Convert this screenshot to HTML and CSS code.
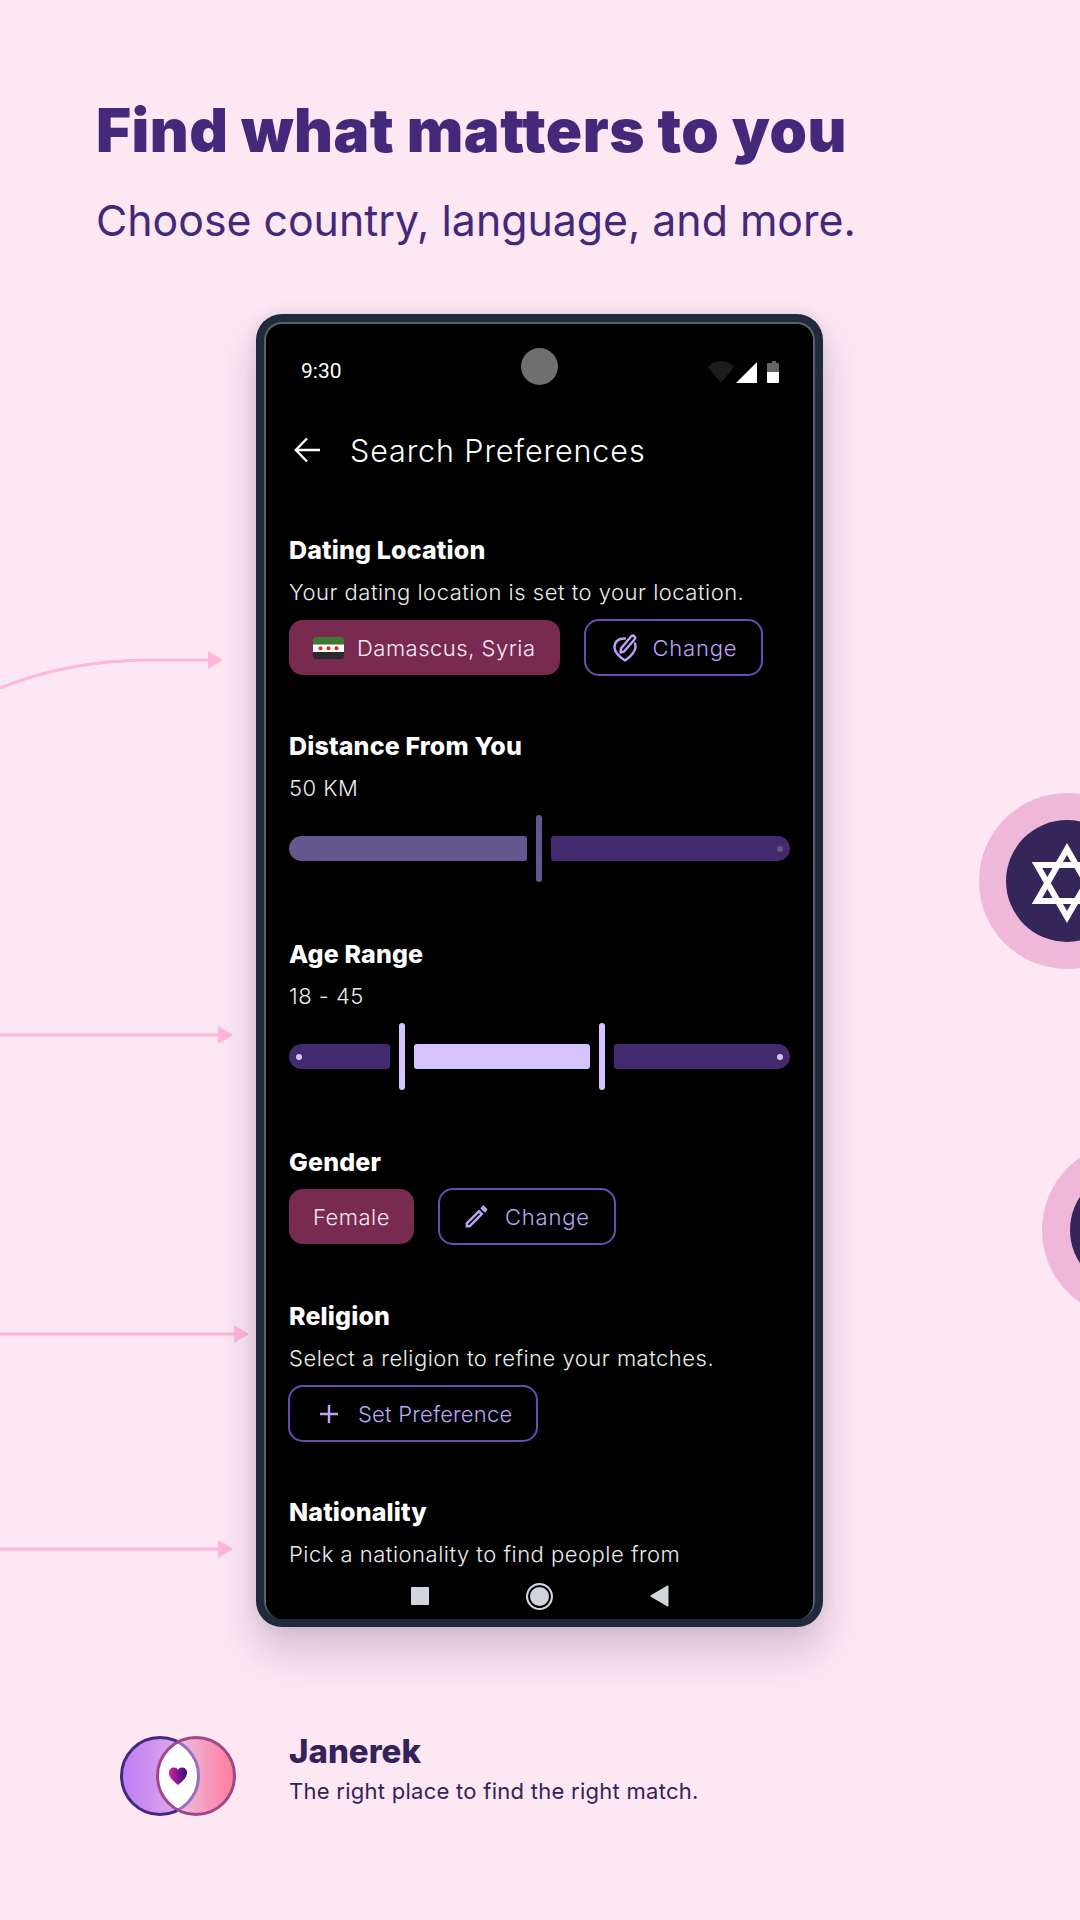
FILE: index.html
```html
<!DOCTYPE html>
<html lang="en">
<head>
    <meta charset="UTF-8">
    <meta name="viewport" content="width=device-width, initial-scale=1.0">
    <title>Janerek - Find what matters to you</title>
    <link rel="stylesheet" href="styles.css">
</head>
<body>
    <div class="page">
        <!-- Arrows and circles peeking in around the phone -->
        <svg class="decor" viewBox="0 0 1080 1920" aria-hidden="true">
            <g class="arrow-line">
                <path d="M0 688C50 668 100 660 150 660H210"/>
                <path d="M0 1035H220"/>
                <path d="M0 1334H236"/>
                <path d="M0 1549H220"/>
            </g>
            <g class="arrow-head">
                <polygon points="208,651 223,660 208,669"/>
                <polygon points="218,1026 233,1035 218,1044"/>
                <polygon points="234,1325 249,1334 234,1343"/>
                <polygon points="218,1540 233,1549 218,1558"/>
            </g>
            <circle class="ring" cx="1067" cy="881" r="88"/>
            <circle class="ring-inner" cx="1067" cy="881" r="61"/>
            <g class="star">
                <polygon points="1067,849 1097,901 1037,901"/>
                <polygon points="1067,917 1037,865 1097,865"/>
            </g>
            <circle class="ring" cx="1130" cy="1230" r="88"/>
            <circle class="ring-inner" cx="1130" cy="1230" r="60"/>
        </svg>

        <header class="hero">
            <h1>Find what matters to you</h1>
            <p>Choose country, language, and more.</p>
        </header>

        <div class="phone">
            <div class="screen">
                <div class="status-bar">
                    <span class="clock">9:30</span>
                    <span class="camera"></span>
                    <svg class="status-icons" width="71" height="22" viewBox="0 0 71 22">
                        <path d="M0 6C3 2 8 0 13 0s10 2 13 6L13 22z" fill="#1c1c1c"/>
                        <path d="M28 22L49 1v21z" fill="#fff"/>
                        <path d="M62 2h2V0h4v2h2a1 1 0 0 1 1 1v8H59V3a1 1 0 0 1 1-1z" fill="#666"/>
                        <path d="M59 11h12v10a1 1 0 0 1-1 1H60a1 1 0 0 1-1-1z" fill="#fff"/>
                    </svg>
                </div>

                <div class="app-bar">
                    <svg width="26" height="26" viewBox="0 0 26 26" fill="none" stroke="#fff" stroke-width="2.4">
                        <path d="M26 13H2M13 1.500L1.800 13 13 24.500"/>
                    </svg>
                    <span>Search Preferences</span>
                </div>

                <div class="content">
                    <section class="pref">
                        <h2>Dating Location</h2>
                        <p class="hint">Your dating location is set to your location.</p>
                        <div class="actions">
                            <div class="chip">
                                <svg class="flag" width="31" height="22" viewBox="0 0 31 22">
                                    <rect width="31" height="7.500" fill="#3f7a35"/>
                                    <rect y="7.500" width="31" height="7.500" fill="#fff"/>
                                    <rect y="15" width="31" height="7" fill="#2a2a2a"/>
                                    <g fill="#e8231a">
                                        <circle cx="7.500" cy="11.200" r="2"/>
                                        <circle cx="15.500" cy="11.200" r="2"/>
                                        <circle cx="23.500" cy="11.200" r="2"/>
                                    </g>
                                </svg>
                                Damascus, Syria
                            </div>
                            <div class="btn-outline">
                                <svg width="24" height="28" viewBox="0 0 24 28" fill="none" stroke="#bfa3f5" stroke-width="2.4" stroke-linecap="round" stroke-linejoin="round">
                                    <path d="M12 4.500C6 4 1.500 7.500 1.500 13c0 5 5 10 10.500 13.500C17 23 22.500 18 22.500 12.500c0-1-.2-2-.5-3"/>
                                    <path d="M8 14.500L18 2.500c1-1 2.500-1 3.500 0s1 2 0 3L11 17.500l-3.500 1z"/>
                                </svg>
                                Change
                            </div>
                        </div>
                    </section>

                    <section class="pref pref-slider">
                        <h2>Distance From You</h2>
                        <p class="hint">50 KM</p>
                        <div class="slider">
                            <div class="track track-start track-mid"></div>
                            <div class="handle handle-mid"></div>
                            <div class="track track-end">
                                <span class="stop stop-mid"></span>
                            </div>
                        </div>
                    </section>

                    <section class="pref pref-slider">
                        <h2>Age Range</h2>
                        <p class="hint">18 - 45</p>
                        <div class="slider">
                            <div class="track track-start track-low">
                                <span class="stop"></span>
                            </div>
                            <div class="handle"></div>
                            <div class="track track-range"></div>
                            <div class="handle"></div>
                            <div class="track track-end">
                                <span class="stop"></span>
                            </div>
                        </div>
                    </section>

                    <section class="pref">
                        <h2>Gender</h2>
                        <div class="actions actions-tight">
                            <div class="chip">Female</div>
                            <div class="btn-outline btn-edit">
                                <svg width="29" height="29" viewBox="0 0 24 24" fill="#bfa3f5">
                                    <path d="M3 17.250V21h3.750L17.810 9.940l-3.750-3.750L3 17.250zM5.920 19H5v-.92l9.060-9.060.92.92L5.920 19zM20.710 5.630l-2.340-2.340c-.39-.39-1.020-.39-1.410 0l-1.830 1.830 3.750 3.750 1.830-1.830c.39-.39.39-1.020 0-1.410z"/>
                                </svg>
                                Change
                            </div>
                        </div>
                    </section>

                    <section class="pref">
                        <h2>Religion</h2>
                        <p class="hint">Select a religion to refine your matches.</p>
                        <div class="actions">
                            <div class="btn-outline btn-wide">
                                <svg width="20" height="20" viewBox="0 0 20 20" stroke="#bfa3f5" stroke-width="2.4">
                                    <path d="M10 1v18M1 10h18"/>
                                </svg>
                                Set Preference
                            </div>
                        </div>
                    </section>

                    <section class="pref">
                        <h2>Nationality</h2>
                        <p class="hint">Pick a nationality to find people from</p>
                    </section>
                </div>

                <div class="nav-bar">
                    <span class="nav-square"></span>
                    <span class="nav-home"></span>
                    <svg width="19" height="22" viewBox="0 0 19 22">
                        <path d="M18.500 1.500v19a1 1 0 0 1-1.500.8L.8 11.800a1 1 0 0 1 0-1.600L17 .7a1 1 0 0 1 1.500.8z" fill="#d1d5db"/>
                    </svg>
                </div>
            </div>
        </div>

        <footer class="brand">
            <svg class="logo" width="118" height="82" viewBox="0 0 118 82">
                <defs>
                    <linearGradient id="logoLeft">
                        <stop offset="0" stop-color="#bd7cf6"/>
                        <stop offset="1" stop-color="#eab8e4"/>
                    </linearGradient>
                    <linearGradient id="logoRight">
                        <stop offset="0" stop-color="#e6d6fb"/>
                        <stop offset="1" stop-color="#ff7b9c"/>
                    </linearGradient>
                    <linearGradient id="logoHeart">
                        <stop offset="0" stop-color="#d81fa6"/>
                        <stop offset="1" stop-color="#2c1078"/>
                    </linearGradient>
                    <clipPath id="logoClipLeft">
                        <circle cx="41" cy="41" r="38.500"/>
                    </clipPath>
                    <clipPath id="logoClipRight">
                        <circle cx="77" cy="41" r="38.500"/>
                    </clipPath>
                </defs>
                <circle cx="41" cy="41" r="38.500" fill="url(#logoLeft)" stroke="#40297e" stroke-width="3"/>
                <circle cx="77" cy="41" r="38.500" fill="url(#logoRight)"/>
                <circle cx="77" cy="41" r="38.500" fill="#fff" clip-path="url(#logoClipLeft)"/>
                <circle cx="41" cy="41" r="38.500" fill="none" stroke="#9270c4" stroke-width="3" clip-path="url(#logoClipRight)"/>
                <circle cx="77" cy="41" r="38.500" fill="none" stroke="#a0478c" stroke-width="3"/>
                <path d="M59 50C53 45 50 42 50 37.500c0-3 2.300-5 5-5 1.700 0 3 .8 4 2.200 1-1.400 2.300-2.200 4-2.200 2.700 0 5 2 5 5 0 4.500-3 7.500-9 12.500z" fill="url(#logoHeart)"/>
            </svg>
            <div class="brand-text">
                <strong>Janerek</strong>
                <span>The right place to find the right match.</span>
            </div>
        </footer>
    </div>
</body>
</html>
```

FILE: styles.css
```css
/* Global styles */
body {
    margin: 0;
    font-family: 'Inter', 'Liberation Sans', sans-serif;
}

.page {
    position: relative;
    width: 1080px;
    height: 1920px;
    overflow: hidden;
    background: #fce7f3;
}

.decor {
    position: absolute;
    top: 0;
    left: 0;
    width: 1080px;
    height: 1920px;
}

.arrow-line path {
    fill: none;
    stroke: #ffb6da;
    stroke-width: 3;
}

.arrow-head {
    fill: #ffb6da;
}

.ring {
    fill: #f0b8d8;
}

.ring-inner {
    fill: #35265a;
}

.star polygon {
    fill: none;
    stroke: #fff;
    stroke-width: 6;
}

/* Headline */
.hero {
    position: relative;
    padding: 92px 0 0 96px;
    color: #44297a;
}

.hero h1 {
    margin: 0;
    font-size: 60px;
    line-height: 76px;
    font-weight: 900;
    letter-spacing: 0.5px;
}

.hero p {
    margin: 24px 0 0;
    font-size: 42.800px;
    line-height: 58px;
    font-weight: 400;
}

/* Phone */
.phone {
    position: relative;
    box-sizing: border-box;
    width: 567px;
    height: 1313px;
    margin: 64px 0 0 256px;
    background: #1f2a3c;
    border-radius: 26px;
    padding: 8px;
    box-shadow: 0 24px 40px rgba(60, 30, 70, 0.2), 0 0 14px rgba(60, 30, 70, 0.1);
}

.screen {
    display: flex;
    flex-direction: column;
    box-sizing: border-box;
    height: 100%;
    background: #000;
    border: solid #5a5f65;
    border-width: 2px 2px 0;
    border-radius: 18px;
    overflow: hidden;
    color: #fff;
}

.status-bar {
    display: flex;
    align-items: center;
    justify-content: space-between;
    position: relative;
    height: 88px;
    padding: 0 34px 0 35px;
    flex-shrink: 0;
}

.clock {
    font-family: 'Roboto', sans-serif;
    font-size: 21px;
    font-weight: 400;
    margin-top: 5px;
}

.camera {
    position: absolute;
    left: 255px;
    top: 24px;
    width: 37px;
    height: 37px;
    border-radius: 50%;
    background: #6f6f6f;
}

.status-icons {
    margin-top: 8px;
}

.app-bar {
    display: flex;
    align-items: center;
    gap: 30px;
    height: 76px;
    padding-left: 28px;
    flex-shrink: 0;
    font-size: 30.500px;
    font-weight: 300;
    letter-spacing: 0.9px;
}

.content {
    flex: 1;
    min-height: 0;
    overflow: hidden;
    padding: 46px 0 0 23px;
}

.pref {
    margin-bottom: 54px;
}

.pref-slider {
    margin-bottom: 56px;
}

.pref h2 {
    margin: 0;
    font-size: 25px;
    line-height: 32px;
    font-weight: 800;
    letter-spacing: 0.15px;
}

.hint {
    margin: 11px 0 0;
    font-size: 22px;
    line-height: 30px;
    font-weight: 300;
    letter-spacing: 0.5px;
    color: #ececec;
}

.actions {
    display: flex;
    gap: 24px;
    margin-top: 12px;
}

.actions-tight {
    margin: 10px 0 55px;
}

.chip {
    display: flex;
    align-items: center;
    gap: 13px;
    height: 55px;
    margin-top: 1px;
    padding: 0 24px;
    background: #782a50;
    border-radius: 14px;
    font-size: 22px;
    font-weight: 300;
    letter-spacing: 0.5px;
    color: #f5e9f1;
}

.flag {
    border-radius: 3px;
}

.btn-outline {
    display: flex;
    align-items: center;
    gap: 16px;
    box-sizing: border-box;
    height: 57px;
    padding: 0 24px 0 27px;
    border: 2px solid #6a4bb0;
    border-radius: 15px;
    font-size: 22px;
    font-weight: 300;
    letter-spacing: 0.8px;
    color: #bfa3f5;
}

.btn-edit {
    gap: 14px;
    padding-left: 22px;
}

.btn-wide {
    margin-left: -1px;
    gap: 19px;
    padding: 0 24px 0 29px;
    letter-spacing: 0.2px;
}

/* Sliders */
.slider {
    display: flex;
    align-items: center;
    gap: 9px;
    width: 501px;
    height: 67px;
    margin-top: 12px;
}

.track {
    position: relative;
    height: 25px;
    border-radius: 3px;
    background: #432a6e;
}

.track-start {
    border-radius: 13px 3px 3px 13px;
}

.track-end {
    flex: 1;
    border-radius: 3px 13px 13px 3px;
}

.track-mid {
    width: 238px;
    background: #66568f;
}

.track-low {
    width: 101px;
}

.track-range {
    width: 176px;
    background: #d6c3fe;
}

.handle {
    flex-shrink: 0;
    width: 6px;
    height: 67px;
    border-radius: 3px;
    background: #d6c3fe;
}

.handle-mid {
    background: #66568f;
}

.stop {
    position: absolute;
    top: 9.500px;
    left: 7px;
    width: 6px;
    height: 6px;
    border-radius: 50%;
    background: #d6c3fe;
}

.track-end .stop {
    left: auto;
    right: 7px;
}

.track-end .stop-mid {
    background: #66568f;
}

/* Android nav buttons */
.nav-bar {
    display: flex;
    align-items: center;
    justify-content: center;
    gap: 97px;
    height: 46px;
    flex-shrink: 0;
    background: #000;
}

.nav-square {
    width: 18px;
    height: 18px;
    border-radius: 1px;
    background: #d1d5db;
}

.nav-home {
    box-sizing: border-box;
    width: 27px;
    height: 27px;
    border-radius: 50%;
    border: 2px solid #d1d5db;
    background: #d1d5db;
    box-shadow: inset 0 0 0 2px #000;
}

/* Footer */
.brand {
    position: relative;
    display: flex;
    align-items: center;
    gap: 52px;
    margin: 108px 0 0 119px;
    color: #33235a;
}

.brand-text {
    display: flex;
    flex-direction: column;
    gap: 7px;
    margin-top: -14px;
}

.brand-text strong {
    font-size: 33px;
    line-height: 36px;
    font-weight: 800;
}

.brand-text span {
    font-size: 22px;
    line-height: 30px;
    font-weight: 400;
    letter-spacing: 0.27px;
}
```
